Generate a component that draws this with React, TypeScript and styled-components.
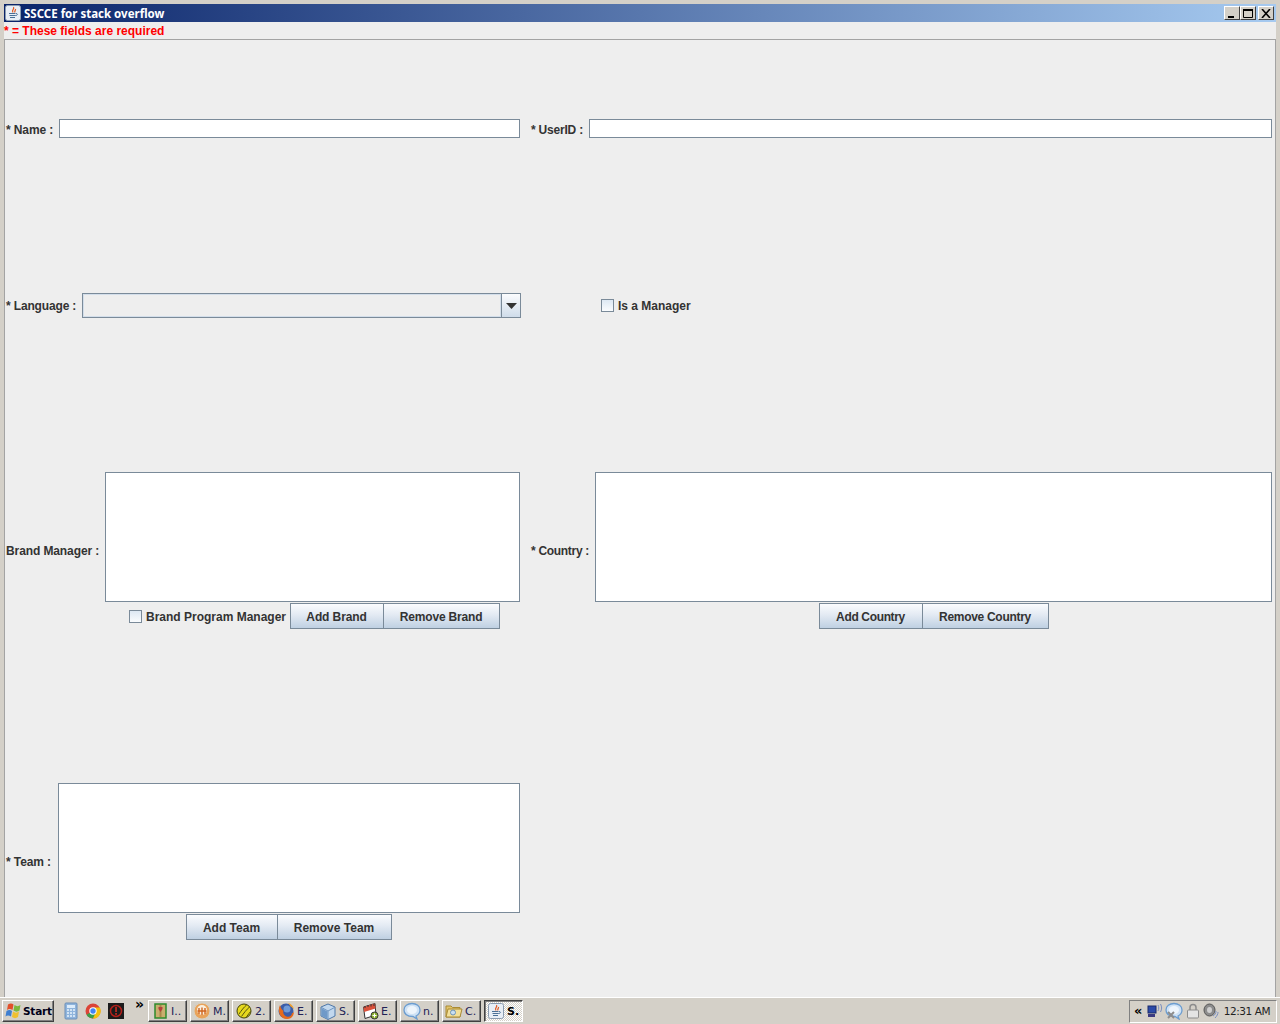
import React from "react";
import styled, { createGlobalStyle } from "styled-components";

const Global = createGlobalStyle`
  html, body { margin: 0; padding: 0; background: #d4d0c8; }
  body { font-family: "Liberation Sans", Arial, sans-serif; }
`;

const Screen = styled.div`
  width: 1280px; height: 1024px; display: flex; flex-direction: column; overflow: hidden; background: #d4d0c8;
`;
const Window = styled.div`
  height: 997px; box-sizing: border-box; padding: 4px 4px 0; display: flex; flex-direction: column; background: #d4d0c8;
`;
const TitleBar = styled.div`
  height: 18px; flex: none; display: flex; align-items: center; padding: 0 2px 0 1px; gap: 3px;
  background: linear-gradient(90deg, #0a246a 0%, #a6caf0 100%);
`;
const TitleText = styled.span`
  flex: 1; color: #fff; font: bold 11.5px "Noto Sans", sans-serif; white-space: nowrap;
`;
const WinButtons = styled.div`display: flex; align-items: center;`;
const WinButton = styled.button<{ $gap?: number }>`
  width: 16px; height: 14px; padding: 0; margin-left: ${p => p.$gap ?? 0}px; display: flex; align-items: center; justify-content: center;
  background: #d4d0c8; border: 1px solid; border-color: #fff #404040 #404040 #fff; box-sizing: border-box;
`;
const Content = styled.div`
  flex: 1; background: #eeeeee; display: flex; flex-direction: column; min-height: 0;
`;
const Required = styled.div`
  height: 17px; flex: none; box-sizing: border-box; padding: 2px 0 0 0; color: #ff0000; font: bold 12px "Liberation Sans", sans-serif; line-height: 14px;
`;
const Panel = styled.div`
  flex: 1; border: 1px solid #a3a3a3; border-bottom: none; box-sizing: border-box;
  padding: 79px 0 0 1px; display: grid; grid-template-columns: 514px 741px; column-gap: 11px;
  grid-template-rows: 20px 25px 157px 157px; row-gap: 154px; align-content: start;
`;
const Row = styled.div`display: flex; align-items: center; min-width: 0;`;
const FieldRow = styled(Row)`align-items: flex-start;`;
const Label = styled.label<{ $w: number; $ls?: number; $top?: number }>`
  flex: none; width: ${p => p.$w}px; font: bold 12px "Liberation Sans", sans-serif; color: #333; white-space: nowrap;
  letter-spacing: ${p => p.$ls ?? -0.1}px; padding-top: ${p => p.$top ?? 0}px;
`;
const TextField = styled.div`
  flex: 1; height: 19px; box-sizing: border-box; background: #fff; border: 1px solid #7a8a99;
`;
const Combo = styled.div`
  width: 439px; height: 25px; flex: none; box-sizing: border-box; display: flex; border: 1px solid #7a8a99; background: #eee;
`;
const ComboValue = styled.div`
  flex: 1; box-sizing: border-box; border: 1px solid #d3deea; background: #eeeeee;
`;
const ComboArrow = styled.div`
  width: 19px; flex: none; box-sizing: border-box; border-left: 1px solid #7a8a99; display: flex; align-items: center; justify-content: center;
  background: linear-gradient(#fbfcfe, #cfdcea);
`;
const CheckRow = styled.div<{ $ml?: number }>`
  display: flex; align-items: center; gap: 4px; margin-left: ${p => p.$ml ?? 0}px; font: bold 12px "Liberation Sans", sans-serif; color: #333; white-space: nowrap;
`;
const CheckText = styled.span<{ $top?: number }>`
  padding-top: ${p => p.$top ?? 0}px;
`;
const CheckBox = styled.span`
  width: 13px; height: 13px; box-sizing: border-box; flex: none; border: 1px solid #7a8a99; background: linear-gradient(#dde8f3, #fafcfe);
`;
const ListCell = styled.div`display: flex; align-items: center; min-width: 0;`;
const ListColumn = styled.div`flex: 1; min-width: 0; display: flex; flex-direction: column;`;
const ListBox = styled.div`
  height: 130px; box-sizing: border-box; background: #fff; border: 1px solid #7a8a99;
`;
const Buttons = styled.div<{ $pl: number }>`
  display: flex; align-items: center; height: 26px; margin-top: 1px; padding-left: ${p => p.$pl}px;
`;
const MetalButton = styled.button<{ $w: number; $first?: boolean; $ls?: number; $ml?: number }>`
  width: ${p => p.$w}px; height: 26px; padding: 1px 1px 0 0; box-sizing: border-box; border: 1px solid #7a8a99; ${p => p.$first ? "border-right: none;" : ""}
  margin-left: ${p => p.$ml ?? 0}px; letter-spacing: ${p => p.$ls ?? 0}px;
  background: linear-gradient(#fbfcfe 0%, #e3eaf3 45%, #bfd0e2 100%);
  font: bold 12px "Liberation Sans", sans-serif; color: #333;
`;

const Taskbar = styled.div`
  height: 27px; flex: none; box-sizing: border-box; border-top: 1px solid #fff; background: #d4d0c8; display: flex; align-items: center; padding: 0 3px 0 2px;
  font: 11px "DejaVu Sans", sans-serif; color: #000;
`;
const StartButton = styled.div`
  width: 52px; height: 22px; box-sizing: border-box; display: flex; align-items: center; gap: 1px; padding-left: 1px; font: bold 10.5px "DejaVu Sans", sans-serif; letter-spacing: -0.2px; color: #000018;
  border: 1px solid; border-color: #fff #404040 #404040 #fff; box-shadow: inset -1px -1px 0 #808080;
`;
const QuickLaunch = styled.div`
  display: flex; align-items: center; gap: 7px; margin-left: 10px; width: 84px; position: relative;
`;
const Chevron = styled.span`
  position: absolute; left: 71px; top: -5px; font: bold 14px "DejaVu Sans", sans-serif; line-height: 14px;
`;
const TaskButton = styled.div<{ $active?: boolean }>`
  width: 39px; height: 22px; margin-right: 3px; flex: none; box-sizing: border-box; display: flex; align-items: center; gap: 2px; padding-left: 2px; overflow: hidden;
  border: 1px solid; border-color: #fff #404040 #404040 #fff; box-shadow: inset -1px -1px 0 #808080; color: #222255; font: 11px "DejaVu Sans", sans-serif;
  ${p => p.$active ? `
    border-color: #404040 #fff #fff #404040; box-shadow: inset 1px 1px 0 #808080; color: #000; font-weight: bold;
    background: repeating-conic-gradient(#fff 0 25%, #d4d0c8 0 50%) 0 0 / 2px 2px;
  ` : ""}
`;
const IconSlot = styled.span`
  width: 18px; height: 18px; flex: none; display: flex; align-items: center; justify-content: center;
`;
const Tray = styled.div`
  margin-left: auto; width: 148px; height: 23px; box-sizing: border-box; display: flex; align-items: center; gap: 1px; padding-left: 4px;
  border: 1px solid; border-color: #808080 #fff #fff #808080;
`;
const TrayChevron = styled.span`
  font: bold 13px "DejaVu Sans", sans-serif; width: 12px; line-height: 14px;
`;
const Clock = styled.span`
  margin-left: auto; margin-right: 6px; font: 10.5px "DejaVu Sans", sans-serif; color: #222; letter-spacing: -0.45px;
`;

const JavaIcon = () => (
  <svg width="16" height="16" viewBox="0 0 16 16" style={{ flex: "none" }}>
    <rect x="0.5" y="0.5" width="15" height="15" rx="2" fill="#e8eef6" stroke="#8a9bb0" />
    <path d="M8.500 2c1.500 2-2.500 3-.5 5.500M10.500 4c.5 1-1.500 2-.5 3.500" stroke="#e2571e" strokeWidth="1.200" fill="none" />
    <path d="M4 8.500h6.500M4.500 10.500h6M5 12.500h5" stroke="#4a6f96" strokeWidth="1" fill="none" />
    <path d="M11 8.500c2 0 2 2-.5 2" stroke="#4a6f96" fill="none" />
  </svg>
);
const Xp = () => (
  <svg width="18" height="18" viewBox="0 0 18 18" style={{ flex: "none" }}>
    <path d="M4 2.500c2-1.500 4-1.500 5.500 0l-1 5.500c-2-1.500-4-1.500-5.500 0z" fill="#e2502a" />
    <path d="M10.500 3c2 1.500 4 1.500 6 0l-1 5.500c-2 1.500-4 1.500-6 0z" fill="#7cb83c" />
    <path d="M2.500 9c2-1.500 4-1.500 5.500 0l-1 5.500c-2-1.500-4-1.500-5.500 0z" fill="#3f7fd0" />
    <path d="M9 9.500c2 1.500 4 1.500 6 0l-1 5.500c-2 1.500-4 1.500-6 0z" fill="#f0c030" />
  </svg>
);
const Calc = () => (
  <svg width="14" height="18" viewBox="0 0 14 18" style={{ flex: "none" }}>
    <rect x="1" y="1" width="12" height="16" rx="1" fill="#8fb4dc" stroke="#6d8fb8" />
    <rect x="3" y="3" width="8" height="3" fill="#dcecfb" />
    <path d="M3 8h2M6 8h2M9 8h2M3 11h2M6 11h2M9 11h2M3 14h2M6 14h2M9 14h2" stroke="#e8f2fb" strokeWidth="1.500" />
  </svg>
);
const Chrome = () => (
  <svg width="16" height="16" viewBox="0 0 16 16" style={{ flex: "none" }}>
    <circle cx="8" cy="8" r="7.500" fill="#db4437" />
    <path d="M8 8 1.500 11.700A7.500 7.500 0 0 0 8 15.500L11.700 9z" fill="#3a9f4a" />
    <path d="M8 4.500h6.900A7.500 7.500 0 0 1 8 15.500L11 9z" fill="#f4c20d" />
    <circle cx="8" cy="8" r="3.700" fill="#fff" />
    <circle cx="8" cy="8" r="2.700" fill="#4285f4" />
  </svg>
);
const Blocker = () => (
  <svg width="16" height="16" viewBox="0 0 16 16" style={{ flex: "none" }}>
    <rect width="16" height="16" fill="#1b1b1b" />
    <circle cx="8" cy="8" r="5.500" fill="none" stroke="#b3201a" strokeWidth="1.500" />
    <rect x="7.200" y="4" width="1.700" height="5" fill="#c22a20" />
    <rect x="7.200" y="10" width="1.700" height="1.800" fill="#c22a20" />
  </svg>
);
const Parcel = () => (
  <svg width="13" height="16" viewBox="0 0 13 16">
    <rect x="1" y="1" width="11" height="14" fill="#c9ae6e" stroke="#2d8a2d" strokeWidth="1.500" />
    <rect x="5.500" y="2" width="2" height="12" fill="#a8884a" />
    <path d="M4.500 4h4v2l-2 3-2-3z" fill="#b3413a" />
  </svg>
);
const Orange = () => (
  <svg width="18" height="18" viewBox="0 0 18 18">
    <circle cx="9" cy="9" r="8" fill="#e9a35a" stroke="#d8d0c0" />
    <circle cx="9" cy="8" r="5" fill="#f9efe0" />
    <path d="M6 6v6M9 5.500v7.500M12 6v6M4.500 9h9" stroke="#d0651f" strokeWidth="1.400" />
  </svg>
);
const Ball = () => (
  <svg width="16" height="16" viewBox="0 0 16 16">
    <ellipse cx="8" cy="8" rx="7" ry="7" fill="#e6d81e" stroke="#44440a" />
    <path d="M3 11c2-3 5-7 8-9.500M5.500 13.500c2-3 5-7 8-9.500M10 14.500c1.500-2 3-4 4.500-6" stroke="#55530f" fill="none" />
  </svg>
);
const Firefox = () => (
  <svg width="18" height="18" viewBox="0 0 18 18">
    <circle cx="9" cy="9" r="7.500" fill="#3c5da8" />
    <circle cx="10" cy="7" r="3.500" fill="#6f9ad8" />
    <path d="M3 3C0 9 3 17 10 17c5 0 7-4 7-7.500-.5 1-1 1.500-2 1.500 0 3-3 4.500-5.500 3.500C7 13.500 5.500 11 6.500 9 5 8 3.500 6 3 3z" fill="#e66a1c" />
    <path d="M11 1c3 .5 5.500 3 6 6.500-1-1.500-2-2.500-3.500-3C13 3 12 2 11 1z" fill="#f2a02c" />
  </svg>
);
const Cube = () => (
  <svg width="16" height="17" viewBox="0 0 16 17">
    <path d="M8 1 15 4v9l-7 3.500L1 13V4z" fill="#c2d8ee" stroke="#4f78a8" />
    <path d="M1.500 4.500 8 8l6.500-3.500M8 8v8" stroke="#6c93bf" fill="none" />
    <path d="M1.500 5 7.500 8.500V16L1.500 12.700z" fill="#6f99c8" />
  </svg>
);
const Calendar = () => (
  <svg width="18" height="18" viewBox="0 0 18 18">
    <path d="M2.500 5 14 1.500l1 11.500-11 3.500z" fill="#fff" stroke="#333" />
    <path d="M2.500 5 14 1.500l.5 5L3 10z" fill="#d9513a" />
    <path d="M4 4v2M7 3v2M10 2.500v2M13 2v2" stroke="#333" />
    <circle cx="13.500" cy="13.500" r="3.500" fill="#8cb32f" stroke="#333" />
    <path d="M11.500 13.500h4M13.500 11.500v4" stroke="#fff" />
  </svg>
);
const Bubble = ({ x }: { x?: boolean }) => (
  <svg width="18" height="18" viewBox="0 0 18 18" style={{ flex: "none" }}>
    <path d="M9 1.500c4.500 0 8 2.800 8 6.500 0 3-2 5-4 6l1 3-4-2.500C4.500 14.500 1 12 1 8c0-3.700 3.500-6.500 8-6.500z" fill="#cfe2f5" stroke="#6c9dd0" strokeWidth="1.300" />
    <ellipse cx="9" cy="8" rx="5" ry="4" fill="#eef5fc" />
    {x && <path d="M3 10l6 6M9 10l-6 6" stroke="#8c8c8c" strokeWidth="2" />}
  </svg>
);
const Folder = () => (
  <svg width="18" height="16" viewBox="0 0 18 16">
    <path d="M1 3h5l1.500 1.500H15V14H1z" fill="#e2c46a" stroke="#a98a35" />
    <path d="M3 6h14l-2 8H1z" fill="#f3e09a" stroke="#a98a35" />
    <circle cx="8" cy="9.500" r="2.500" fill="#c8dff2" stroke="#6f93b5" />
  </svg>
);
const Network = () => (
  <svg width="17" height="16" viewBox="0 0 17 16" style={{ flex: "none" }}>
    <rect x="1" y="3" width="8" height="7" fill="#2b4aa8" stroke="#1a2a6a" />
    <rect x="1" y="11" width="7" height="3" fill="#3a3a80" />
    <path d="M11 2c1 2 1 4 0 6M13.500 1c1.500 3 1.500 5 0 8" stroke="#7a8fc0" fill="none" />
  </svg>
);
const Lock = () => (
  <svg width="14" height="16" viewBox="0 0 14 16" style={{ flex: "none", margin: "0 2px" }}>
    <path d="M4 7V4.500a3 3 0 0 1 6 0V7" fill="none" stroke="#8c8c8c" strokeWidth="1.500" />
    <rect x="1.500" y="7" width="11" height="8" rx="1" fill="#e4e4e4" stroke="#8c8c8c" />
  </svg>
);
const Speaker = () => (
  <svg width="16" height="16" viewBox="0 0 16 16" style={{ flex: "none" }}>
    <ellipse cx="6.500" cy="7" rx="5.500" ry="6" fill="#8c8c8c" stroke="#555" />
    <ellipse cx="6.500" cy="7" rx="2.500" ry="3" fill="#d0d0d0" />
    <path d="M13 8c0 2-1 4-3 5M15 9c0 2-1 4-3 6" stroke="#7a8fc0" fill="none" />
  </svg>
);

export default function App() {
  return (
    <Screen>
      <Global />
      <Window>
        <TitleBar>
          <JavaIcon />
          <TitleText>SSCCE for stack overflow</TitleText>
          <WinButtons>
            <WinButton>
              <svg width="10" height="9" viewBox="0 0 10 9"><rect x="1" y="7" width="6" height="2" fill="#000" /></svg>
            </WinButton>
            <WinButton>
              <svg width="10" height="9" viewBox="0 0 10 9"><path d="M.5 1.500h9v7h-9z" fill="none" stroke="#000" /><rect width="10" height="2" fill="#000" /></svg>
            </WinButton>
            <WinButton $gap={2}>
              <svg width="10" height="9" viewBox="0 0 10 9"><path d="M1 0 9 9M9 0 1 9" stroke="#000" strokeWidth="1.600" /></svg>
            </WinButton>
          </WinButtons>
        </TitleBar>
        <Content>
          <Required>* = These fields are required</Required>
          <Panel>
            <FieldRow>
              <Label $w={53} $top={4}>* Name :</Label>
              <TextField />
            </FieldRow>
            <FieldRow>
              <Label $w={58} $top={4} $ls={-0.2}>* UserID :</Label>
              <TextField />
            </FieldRow>
            <Row>
              <Label $w={76} $ls={-0.15}>* Language :</Label>
              <Combo>
                <ComboValue />
                <ComboArrow>
                  <svg width="11" height="6" viewBox="0 0 11 6"><path d="M0 0h11L5.500 6z" fill="#333" /></svg>
                </ComboArrow>
              </Combo>
            </Row>
            <Row>
              <CheckRow $ml={70}><CheckBox /><CheckText>Is a Manager</CheckText></CheckRow>
            </Row>
            <ListCell>
              <Label $w={99}>Brand Manager :</Label>
              <ListColumn>
                <ListBox />
                <Buttons $pl={24}>
                  <CheckRow><CheckBox /><CheckText $top={1}>Brand Program Manager</CheckText></CheckRow>
                  <MetalButton $w={93} $first $ml={4} $ls={-0.1}>Add Brand</MetalButton>
                  <MetalButton $w={117} $ls={-0.17}>Remove Brand</MetalButton>
                </Buttons>
              </ListColumn>
            </ListCell>
            <ListCell>
              <Label $w={64} $ls={-0.3}>* Country :</Label>
              <ListColumn>
                <ListBox />
                <Buttons $pl={224}>
                  <MetalButton $w={103} $first $ls={-0.35}>Add Country</MetalButton>
                  <MetalButton $w={127} $ls={-0.3}>Remove Country</MetalButton>
                </Buttons>
              </ListColumn>
            </ListCell>
            <ListCell>
              <Label $w={52}>* Team :</Label>
              <ListColumn>
                <ListBox />
                <Buttons $pl={128}>
                  <MetalButton $w={91} $first>Add Team</MetalButton>
                  <MetalButton $w={115}>Remove Team</MetalButton>
                </Buttons>
              </ListColumn>
            </ListCell>
          </Panel>
        </Content>
      </Window>
      <Taskbar>
        <StartButton><Xp />Start</StartButton>
        <QuickLaunch>
          <Calc /><Chrome /><Blocker />
          <Chevron>»</Chevron>
        </QuickLaunch>
        <TaskButton><IconSlot><Parcel /></IconSlot>I..</TaskButton>
        <TaskButton><IconSlot><Orange /></IconSlot>M.</TaskButton>
        <TaskButton><IconSlot><Ball /></IconSlot>2.</TaskButton>
        <TaskButton><IconSlot><Firefox /></IconSlot>E.</TaskButton>
        <TaskButton><IconSlot><Cube /></IconSlot>S.</TaskButton>
        <TaskButton><IconSlot><Calendar /></IconSlot>E.</TaskButton>
        <TaskButton><IconSlot><Bubble /></IconSlot>n.</TaskButton>
        <TaskButton><IconSlot><Folder /></IconSlot>C.</TaskButton>
        <TaskButton $active><IconSlot><JavaIcon /></IconSlot>S.</TaskButton>
        <Tray>
          <TrayChevron>«</TrayChevron>
          <Network /><Bubble x /><Lock /><Speaker />
          <Clock>12:31 AM</Clock>
        </Tray>
      </Taskbar>
    </Screen>
  );
}
